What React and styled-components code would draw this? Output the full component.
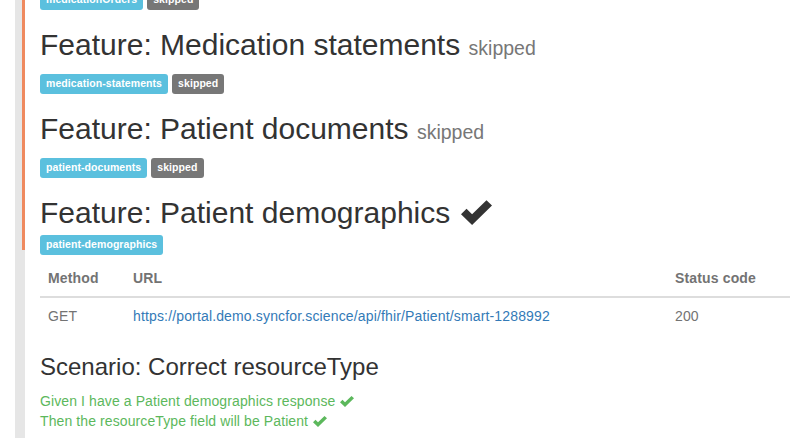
import React from "react";
import styled, { createGlobalStyle } from "styled-components";

const Global = createGlobalStyle`
  html, body { margin: 0; padding: 0; background: #fff; overflow: hidden; }
  body {
    font-family: "Liberation Sans", Arial, Helvetica, sans-serif;
    font-size: 14px;
    line-height: 20px;
    color: #333;
  }
`;

const Page = styled.div`
  display: flex;
  width: 795px;
  height: 438px;
  overflow: hidden;
`;

const Rail = styled.div`
  margin-left: 15px;
  width: 10px;
  flex: 0 0 10px;
  background: #e6e6e6;
  display: flex;
  justify-content: flex-end;
  align-items: flex-start;
`;

const Progress = styled.div`
  width: 3px;
  height: 250px;
  background: #ef8a5f;
`;

const Content = styled.div`
  margin-left: 15px;
  width: 750px;
  margin-top: -10px;
  display: flex;
  flex-direction: column;
`;

const LabelRow = styled.div`
  display: flex;
  gap: 4px;
  height: 20px;
`;

const Label = styled.span`
  display: inline-block;
  font-size: 10.5px;
  font-weight: 700;
  line-height: 11px;
  letter-spacing: 0.08px;
  padding: 4px 6px 5px;
  border-radius: 3px;
  color: #fff;
  white-space: nowrap;
  background: ${(p) => (p.$kind === "skip" ? "#777" : "#5bc0de")};
`;

const FeatureTitle = styled.h2`
  margin: ${(p) => (p.$open ? "18px 0 6px" : "17.5px 0 13.5px")};
  font-size: 30px;
  font-weight: 400;
  line-height: 33px;
  height: 33px;
  color: #333;
  white-space: nowrap;
`;

const Small = styled.small`
  font-size: 65%;
  color: #777;
  font-weight: 400;
`;

const BigCheck = styled.svg`
  width: 31px;
  height: 27px;
  vertical-align: -2px;
  margin-left: 2px;
`;

const Table = styled.table`
  margin-top: 5px;
  width: 750px;
  border-collapse: collapse;
  border-spacing: 0;
  table-layout: fixed;
  color: #737373;
  letter-spacing: 0.15px;
`;

const Th = styled.th`
  box-sizing: border-box;
  text-align: left;
  font-weight: 700;
  padding: 8px;
  line-height: 20px;
  border-bottom: 2px solid #ddd;
  width: ${(p) => p.$w}px;
`;

const Td = styled.td`
  padding: 8px;
  line-height: 20px;
  white-space: nowrap;
`;

const Link = styled.a`
  color: #337ab7;
  text-decoration: none;
`;

const ScenarioTitle = styled.h3`
  margin: 20px 0 11px;
  font-size: 24px;
  font-weight: 400;
  line-height: 26.4px;
  color: #333;
`;

const Step = styled.div`
  color: #5cb85c;
  font-size: 14px;
  line-height: 20px;
  letter-spacing: 0.1px;
  white-space: nowrap;
`;

const SmallCheck = styled.svg`
  width: 14px;
  height: 12px;
  vertical-align: -1px;
  margin-left: 1px;
`;

const CheckShape = ({ color }) => (
  <polygon points="0,15 5,10 10,15 23,2 28,7 10,25" fill={color} />
);

const features = [
  { title: "Medication statements", tag: "medication-statements" },
  { title: "Patient documents", tag: "patient-documents" },
];

export default function App() {
  return (
    <>
      <Global />
      <Page>
        <Rail>
          <Progress />
        </Rail>
        <Content>
          <LabelRow>
            <Label>medicationOrders</Label>
            <Label $kind="skip">skipped</Label>
          </LabelRow>
          {features.map((f) => (
            <React.Fragment key={f.tag}>
              <FeatureTitle>
                Feature: {f.title} <Small>skipped</Small>
              </FeatureTitle>
              <LabelRow>
                <Label>{f.tag}</Label>
                <Label $kind="skip">skipped</Label>
              </LabelRow>
            </React.Fragment>
          ))}
          <FeatureTitle $open>
            Feature: Patient demographics{" "}
            <BigCheck viewBox="0 0 28 25" preserveAspectRatio="none">
              <CheckShape color="#333" />
            </BigCheck>
          </FeatureTitle>
          <LabelRow>
            <Label>patient-demographics</Label>
          </LabelRow>
          <Table>
            <thead>
              <tr>
                <Th $w={85}>Method</Th>
                <Th $w={542}>URL</Th>
                <Th $w={123}>Status code</Th>
              </tr>
            </thead>
            <tbody>
              <tr>
                <Td>GET</Td>
                <Td>
                  <Link href="#">
                    https://portal.demo.syncfor.science/api/fhir/Patient/smart-1288992
                  </Link>
                </Td>
                <Td>200</Td>
              </tr>
            </tbody>
          </Table>
          <ScenarioTitle>Scenario: Correct resourceType</ScenarioTitle>
          <Step>
            Given I have a Patient demographics response{" "}
            <SmallCheck viewBox="0 0 28 25" preserveAspectRatio="none">
              <CheckShape color="#5cb85c" />
            </SmallCheck>
          </Step>
          <Step>
            Then the resourceType field will be Patient{" "}
            <SmallCheck viewBox="0 0 28 25" preserveAspectRatio="none">
              <CheckShape color="#5cb85c" />
            </SmallCheck>
          </Step>
        </Content>
      </Page>
    </>
  );
}
